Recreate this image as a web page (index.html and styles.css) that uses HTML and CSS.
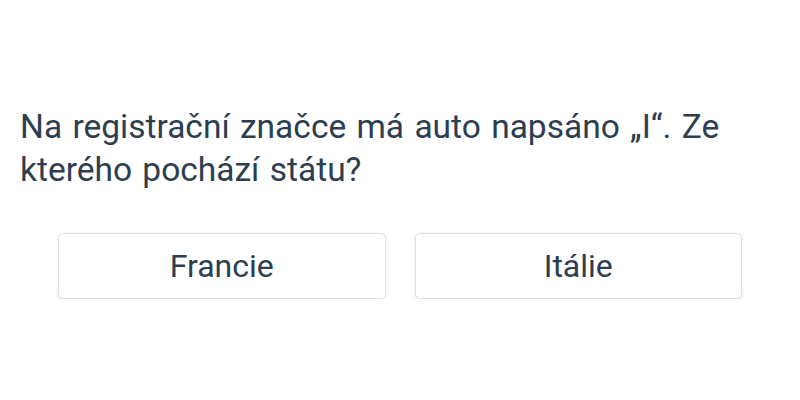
FILE: index.html
```html
<!DOCTYPE html>
<html lang="cs">
<head>
<meta charset="utf-8">
<link rel="stylesheet" href="styles.css">
</head>
<body>
<main class="quiz">
  <p class="question">Na registrační značce má auto napsáno „I“. Ze kterého pochází státu?</p>
  <div class="answers">
    <button class="answer">Francie</button>
    <button class="answer">Itálie</button>
  </div>
</main>
</body>
</html>
```
FILE: styles.css
```css
html, body {
  margin: 0;
  padding: 0;
  background: #ffffff;
}
body {
  font-family: Roboto, "Noto Sans", sans-serif;
  color: #2c3e50;
}
.quiz {
  padding: 105px 20px 0;
}
.question {
  margin: 0;
  font-size: 33.5px;
  line-height: 43px;
  word-spacing: 2px;
  color: #2c3e50;
}
.answers {
  width: 90%;
  margin: 42px auto 0;
  display: grid;
  grid-template-columns: 1fr 1fr;
  gap: 29px;
}
.answer {
  height: 66px;
  background: #ffffff;
  border: 1px solid #e0e0e0;
  border-radius: 5px;
  box-shadow: 0 1px 4px rgba(0, 0, 0, 0.09);
  font-family: Roboto, "Noto Sans", sans-serif;
  font-size: 32px;
  color: #2c3e50;
  padding: 0;
}
```
